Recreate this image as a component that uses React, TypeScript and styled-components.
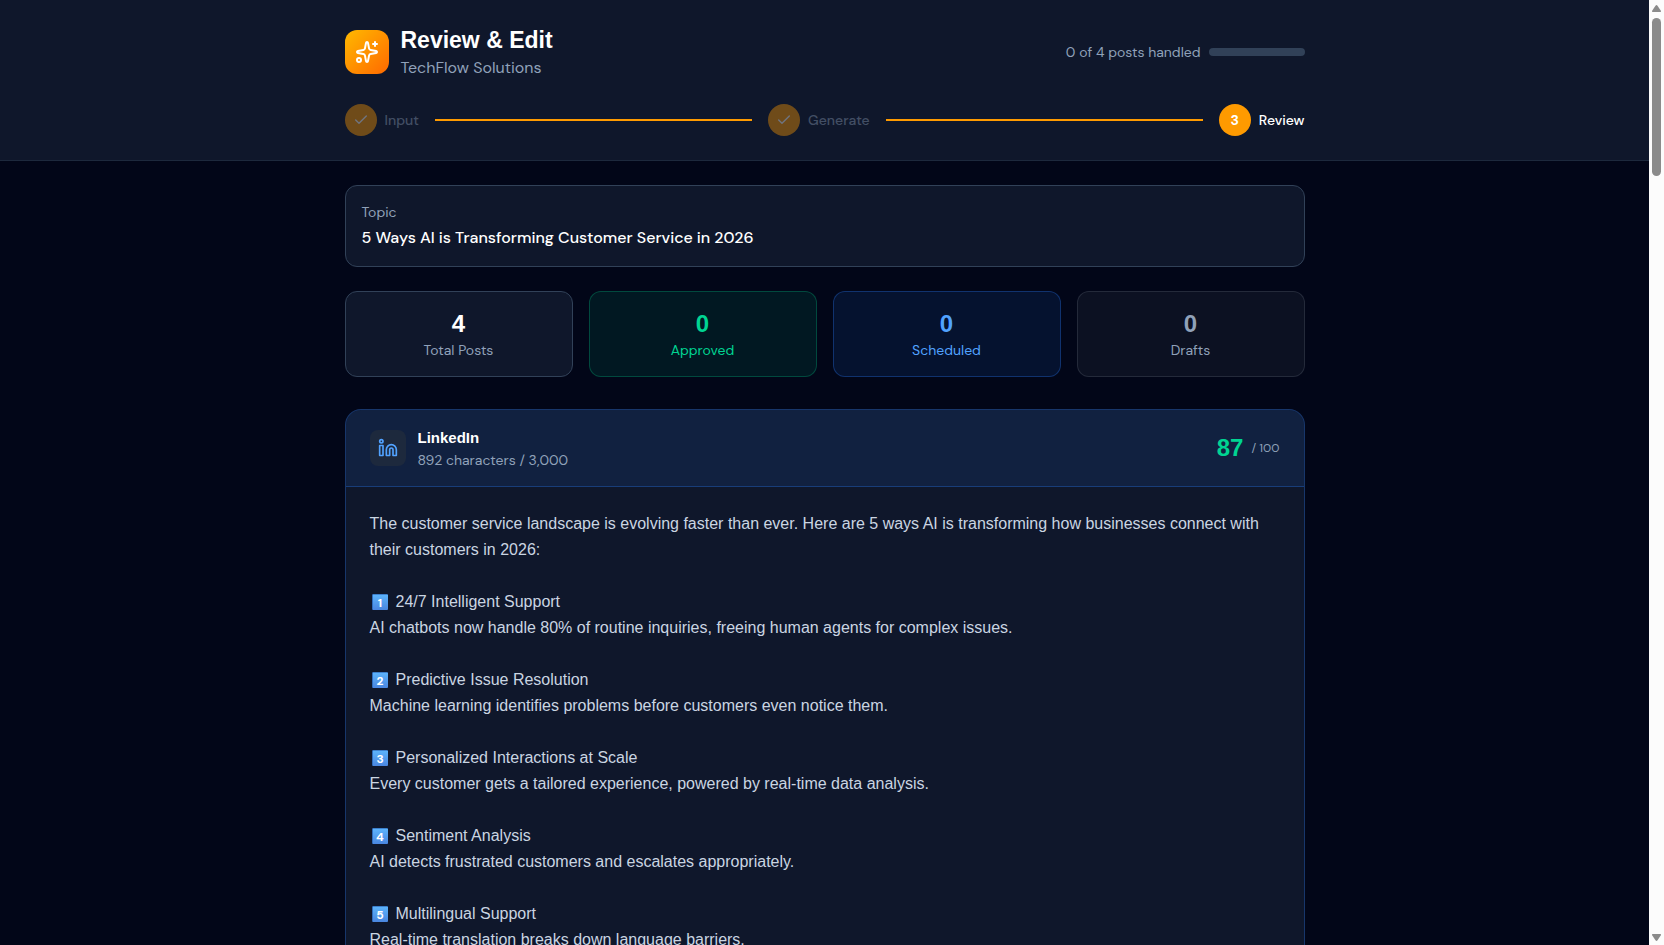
import React, { Fragment } from "react";
import styled, { createGlobalStyle, css } from "styled-components";
import { Check, Linkedin, Sparkles } from "lucide-react";

const color = {
  page: "#020618",
  panel: "#0f172b",
  raised: "#1d293d",
  line: "#314158",
  muted: "#90a1b9",
  body: "#cad5e2",
  white: "#ffffff",
  amber: "#fe9a00",
  emerald: "#00d492",
  blue: "#51a2ff",
};

const sans = `"DM Sans", Inter, sans-serif`;
const arial = `"Liberation Sans", Arial, sans-serif`;

const GlobalStyle = createGlobalStyle`
  *, *::before, *::after { box-sizing: border-box; }
  body {
    margin: 0;
    background: ${color.page};
    color: ${color.white};
    font-family: ${sans};
    font-size: 16px;
    line-height: 24px;
  }
  h1, h2, p, dl, dt, dd { margin: 0; padding: 0; }
  button { font: inherit; color: inherit; background: none; border: 0; padding: 0; }
`;

const Shell = styled.div`
  display: grid;
  grid-template-columns: minmax(0, 1fr) 15px;
  height: 100vh;
`;

const Page = styled.div`
  overflow: hidden;
`;

const Container = styled.div`
  max-width: 1024px;
  margin: 0 auto;
  padding: 24px 32px;
`;

const TopBar = styled.header`
  background: ${color.panel};
  border-bottom: 1px solid ${color.raised};
`;

const TopRow = styled.div`
  display: flex;
  align-items: center;
  justify-content: space-between;
  margin-bottom: 24px;
`;

const Brand = styled.div`
  display: flex;
  align-items: center;
  gap: 12px;
`;

const LogoTile = styled.div`
  display: grid;
  place-items: center;
  width: 44px;
  height: 44px;
  border-radius: 12px;
  background: linear-gradient(to bottom right, #ffb900, #ff6900);
`;

const Title = styled.h1`
  font: 700 23px/32px ${arial};
`;

const Company = styled.p`
  color: ${color.muted};
`;

const Handled = styled.div`
  display: flex;
  align-items: center;
  gap: 8px;
  font-size: 14px;
  line-height: 20px;
  color: ${color.muted};
`;

const ProgressTrack = styled.div`
  width: 96px;
  height: 8px;
  border-radius: 4px;
  background: ${color.line};
`;

const Stepper = styled.nav`
  display: flex;
  align-items: center;
  gap: 16px;
`;

const StepButton = styled.button<{ $current: boolean }>`
  display: flex;
  align-items: center;
  gap: 8px;
  font-size: 14px;
  font-weight: 500;
  line-height: 20px;
  color: ${(p) => (p.$current ? color.white : color.muted)};
  opacity: ${(p) => (p.$current ? 1 : 0.4)};
`;

const StepDot = styled.span`
  display: grid;
  place-items: center;
  width: 32px;
  height: 32px;
  border-radius: 50%;
  background: ${color.amber};
  color: ${color.white};
  font-weight: 700;
`;

const StepLine = styled.span`
  flex: 1;
  height: 2px;
  background: ${color.amber};
`;

const TopicCard = styled.section`
  padding: 16px;
  margin-bottom: 24px;
  border: 1px solid ${color.line};
  border-radius: 12px;
  background: ${color.panel};
`;

const TopicLabel = styled.p`
  margin-bottom: 4px;
  font-size: 14px;
  line-height: 20px;
  color: ${color.muted};
`;

const TopicText = styled.p`
  font-weight: 500;
`;

type Tone = "plain" | "approved" | "scheduled" | "draft";

const tones = {
  plain: css`
    --value: ${color.white};
    --label: ${color.muted};
    background: ${color.panel};
    border-color: ${color.line};
  `,
  approved: css`
    --value: ${color.emerald};
    --label: ${color.emerald};
    background: rgba(0, 188, 125, 0.1);
    border-color: rgba(0, 188, 125, 0.3);
  `,
  scheduled: css`
    --value: ${color.blue};
    --label: ${color.blue};
    background: rgba(43, 127, 255, 0.1);
    border-color: rgba(43, 127, 255, 0.3);
  `,
  draft: css`
    --value: ${color.muted};
    --label: ${color.muted};
    background: rgba(106, 114, 130, 0.1);
    border-color: rgba(106, 114, 130, 0.25);
  `,
};

const Stats = styled.dl`
  display: grid;
  grid-template-columns: repeat(4, minmax(0, 1fr));
  gap: 16px;
  margin-bottom: 32px;
`;

const StatCard = styled.div<{ $tone: Tone }>`
  display: flex;
  flex-direction: column-reverse;
  padding: 16px;
  border: 1px solid;
  border-radius: 12px;
  text-align: center;
  ${(p) => tones[p.$tone]}
`;

const StatValue = styled.dd`
  font: 700 24px/32px ${arial};
  color: var(--value);
`;

const StatLabel = styled.dt`
  font-size: 14px;
  line-height: 20px;
  color: var(--label);
`;

const PostCard = styled.article`
  overflow: hidden;
  border: 1px solid rgba(43, 127, 255, 0.3);
  border-radius: 16px;
  background: ${color.panel};
`;

const PostHeader = styled.header`
  display: flex;
  align-items: center;
  justify-content: space-between;
  padding: 16px 24px;
  border-bottom: 1px solid rgba(43, 127, 255, 0.3);
  background: rgba(43, 127, 255, 0.1);
`;

const NetworkTile = styled.div`
  display: grid;
  place-items: center;
  width: 36px;
  height: 36px;
  border-radius: 8px;
  background: ${color.raised};
  color: ${color.blue};
`;

const NetworkName = styled.h2`
  font: 700 15px/24px ${arial};
`;

const CharCount = styled.p`
  font-size: 14px;
  line-height: 20px;
  color: ${color.muted};
`;

const Score = styled.div`
  display: flex;
  align-items: center;
  gap: 8px;
`;

const ScoreValue = styled.span`
  font: 700 24px/32px ${arial};
  color: ${color.emerald};
`;

const ScoreMax = styled.span`
  font-size: 12px;
  line-height: 16px;
  color: ${color.muted};
`;

const PostBody = styled.div`
  display: grid;
  gap: 26px;
  padding: 24px;
  font: 400 16px/26px ${arial};
  color: ${color.body};
`;

const PointHeading = styled.p`
  display: flex;
  align-items: center;
  gap: 8px;
  padding-left: 2px;
`;

const Keycap = styled.span`
  display: grid;
  place-items: center;
  width: 16px;
  height: 16px;
  border-left: 1px solid #2f6dbd;
  border-top: 1px solid #3d80cc;
  border-radius: 1px;
  background: linear-gradient(#5cb3fb, #4a86e0);
  font: 700 12px/14px ${sans};
  color: ${color.white};
`;

const ScrollRail = styled.div`
  display: flex;
  flex-direction: column;
  align-items: center;
  gap: 6px;
  padding: 5px 3px 4px;
  background: #fcfcfc;
`;

const ScrollThumb = styled.div`
  width: 9px;
  height: 158px;
  border-radius: 5px;
  background: #8b8b8b;
`;

const ScrollSpace = styled.div`
  flex: 1;
`;

const ArrowIcon = ({ down = false }: { down?: boolean }) => (
  <svg width="9" height="7" viewBox="0 0 9 7" fill="#8b8b8b" aria-hidden="true">
    <path
      d={
        down
          ? "M0.6 0h7.8q.9.2.5 1.3L5.5 6.3q-1 1.2-2 0L.1 1.3Q-.3.2.6 0Z"
          : "M0.6 7h7.8q.9-.2.5-1.3L5.5.7q-1-1.2-2 0L.1 5.7Q-.3 6.8.6 7Z"
      }
    />
  </svg>
);

const steps = [
  { name: "Input", current: false },
  { name: "Generate", current: false },
  { name: "Review", current: true },
];

const stats: { label: string; value: number; tone: Tone }[] = [
  { label: "Total Posts", value: 4, tone: "plain" },
  { label: "Approved", value: 0, tone: "approved" },
  { label: "Scheduled", value: 0, tone: "scheduled" },
  { label: "Drafts", value: 0, tone: "draft" },
];

const points = [
  ["24/7 Intelligent Support", "AI chatbots now handle 80% of routine inquiries, freeing human agents for complex issues."],
  ["Predictive Issue Resolution", "Machine learning identifies problems before customers even notice them."],
  ["Personalized Interactions at Scale", "Every customer gets a tailored experience, powered by real-time data analysis."],
  ["Sentiment Analysis", "AI detects frustrated customers and escalates appropriately."],
  ["Multilingual Support", "Real-time translation breaks down language barriers."],
];

export default function App() {
  return (
    <Shell>
      <GlobalStyle />
      <Page>
        <TopBar>
          <Container>
            <TopRow>
              <Brand>
                <LogoTile>
                  <Sparkles size={24} />
                </LogoTile>
                <div>
                  <Title>Review &amp; Edit</Title>
                  <Company>TechFlow Solutions</Company>
                </div>
              </Brand>
              <Handled>
                <span>0 of 4 posts handled</span>
                <ProgressTrack role="progressbar" aria-valuenow={0} aria-valuemax={4} aria-label="Posts handled" />
              </Handled>
            </TopRow>
            <Stepper aria-label="Progress">
              {steps.map((step, i) => (
                <Fragment key={step.name}>
                  {i > 0 && <StepLine />}
                  <StepButton type="button" $current={step.current} disabled={!step.current}>
                    <StepDot>{step.current ? i + 1 : <Check size={16} />}</StepDot>
                    {step.name}
                  </StepButton>
                </Fragment>
              ))}
            </Stepper>
          </Container>
        </TopBar>
        <Container as="main">
          <TopicCard>
            <TopicLabel>Topic</TopicLabel>
            <TopicText>5 Ways AI is Transforming Customer Service in 2026</TopicText>
          </TopicCard>
          <Stats>
            {stats.map((s) => (
              <StatCard key={s.label} $tone={s.tone}>
                <StatLabel>{s.label}</StatLabel>
                <StatValue>{s.value}</StatValue>
              </StatCard>
            ))}
          </Stats>
          <PostCard>
            <PostHeader>
              <Brand>
                <NetworkTile>
                  <Linkedin size={20} />
                </NetworkTile>
                <div>
                  <NetworkName>LinkedIn</NetworkName>
                  <CharCount>892 characters / 3,000</CharCount>
                </div>
              </Brand>
              <Score>
                <ScoreValue>87</ScoreValue>
                <ScoreMax>/ 100</ScoreMax>
              </Score>
            </PostHeader>
            <PostBody>
              <p>
                The customer service landscape is evolving faster than ever. Here are 5 ways AI is transforming how
                businesses connect with their customers in 2026:
              </p>
              {points.map(([heading, text], i) => (
                <div key={heading}>
                  <PointHeading>
                    <Keycap>{i + 1}</Keycap>
                    {heading}
                  </PointHeading>
                  <p>{text}</p>
                </div>
              ))}
            </PostBody>
          </PostCard>
        </Container>
      </Page>
      <ScrollRail aria-hidden="true">
        <ArrowIcon />
        <ScrollThumb />
        <ScrollSpace />
        <ArrowIcon down />
      </ScrollRail>
    </Shell>
  );
}
